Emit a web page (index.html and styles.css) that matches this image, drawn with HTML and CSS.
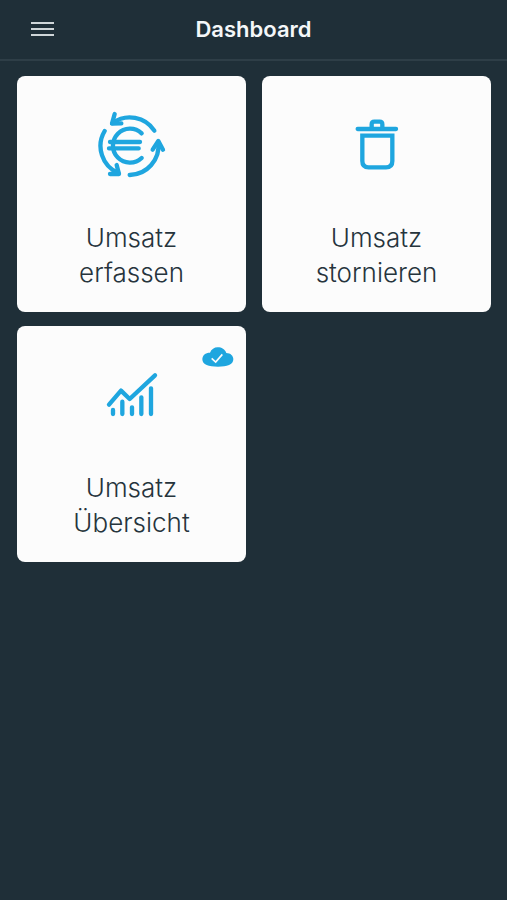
FILE: index.html
```html
<!DOCTYPE html>
<html lang="de">
<head>
  <title>Dashboard</title>
  <meta charset="utf-8">
  <meta name="viewport" content="width=device-width, initial-scale=1">
  <link rel="stylesheet" href="styles.css">
</head>
<body>
  <header class="topbar">
    <button class="menu-button" type="button" aria-label="Menü">
      <span></span>
      <span></span>
      <span></span>
    </button>
    <h1>Dashboard</h1>
  </header>

  <main class="tiles">
    <button class="tile" type="button">
      <!-- euro with three arrows around it -->
      <svg class="icon" viewBox="21 33 207 204">
        <path d="M155 100A51 51 0 1 0 155 174M60 126H150M57 145H146"/>
        <path d="M68 69A88 88 0 0 1 193 92"/>
        <path d="M44 93A88 88 0 0 0 85 219"/>
        <path d="M119 225A88 88 0 0 0 205 127"/>
        <path d="M74 42L66 71L94 70M60 222H87L80 195M188 149L205 123L219 149"/>
      </svg>
      <span class="label">Umsatz<br>erfassen</span>
    </button>

    <button class="tile" type="button">
      <svg class="icon" viewBox="-9 3 207 204">
        <path d="M38 57H153"/>
        <path d="M80 55V43Q80 35 88 35H104Q112 35 112 43V55"/>
        <path stroke-linejoin="miter" d="M52 77H142V153Q142 172 123 172H71Q52 172 52 153Z"/>
      </svg>
      <span class="label">Umsatz<br>stornieren</span>
    </button>

    <button class="tile" type="button">
      <svg class="badge" viewBox="320 35 96 60">
        <path class="cloud" d="M344 52C348 42 357 36 367 36C379 36 389 42 393 53C406 53 414 62 414 72C414 88 395 94 368 94C340 94 321 88 321 72C321 60 330 52 344 52Z"/>
        <path class="check" d="M349 69L361 80L381 57"/>
      </svg>
      <svg class="icon" viewBox="6 78 207 204">
        <path d="M42 209L78 167L104 192L180 121"/>
        <path d="M54 225V237M82 200V237M111 217V237M139 187V237M168 160V237"/>
      </svg>
      <span class="label">Umsatz<br>Übersicht</span>
    </button>
  </main>
</body>
</html>
```
FILE: styles.css
```css
body {
  margin: 0;
  min-height: 100vh;
  background-color: #1f2f38;
  font-family: Inter, "Liberation Sans", sans-serif;
}

/* top bar */
.topbar {
  display: grid;
  grid-template-columns: 54px 1fr 54px;
  align-items: center;
  height: 57px;
  padding-bottom: 2px;
  border-bottom: 2px solid #2e3e47;
}
.topbar h1 {
  margin: 0;
  font-size: 22px;
  line-height: 30px;
  font-weight: 600;
  color: #f4f7f9;
  text-align: center;
}
.menu-button {
  display: flex;
  flex-direction: column;
  gap: 4px;
  width: 23px;
  margin-left: 31px;
  padding: 0;
  border: none;
  background: none;
  cursor: pointer;
}
.menu-button span {
  width: 100%;
  height: 2px;
  background-color: #cfd6d9;
}

/* tiles */
.tiles {
  display: grid;
  grid-template-columns: 1fr 1fr;
  gap: 14px 16px;
  padding: 15px 16px 15px 17px;
}
.tile {
  position: relative;
  display: flex;
  flex-direction: column;
  align-items: center;
  padding: 35px 12px 22px;
  border: none;
  border-radius: 8px;
  background-color: #fcfcfc;
  font-family: inherit;
  cursor: pointer;
}
.icon {
  width: 69px;
  height: 68px;
  fill: none;
  stroke: #1fa6df;
  stroke-width: 13;
  stroke-linecap: round;
  stroke-linejoin: round;
}
.label {
  margin-top: 41px;
  font-size: 26px;
  line-height: 35px;
  font-weight: 300;
  color: #26343c;
}
.badge {
  position: absolute;
  top: 21px;
  right: 12px;
  width: 32px;
  height: 20px;
}
.cloud {
  fill: #1fa6df;
}
.check {
  fill: none;
  stroke: #fcfcfc;
  stroke-width: 5;
}
```
